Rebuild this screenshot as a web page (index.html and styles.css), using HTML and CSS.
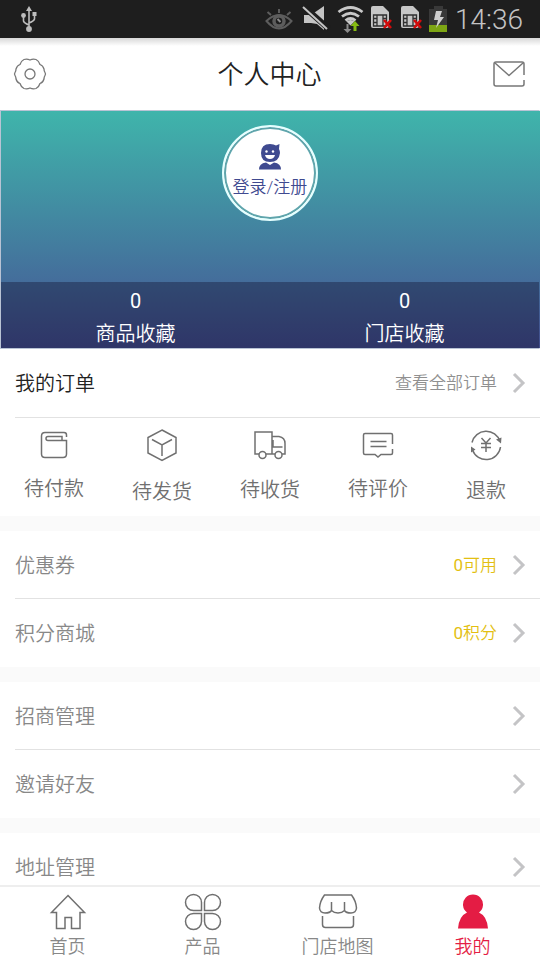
FILE: index.html
```html
<!DOCTYPE html>
<html lang="zh-CN">
<head>
<meta charset="utf-8">
<meta name="viewport" content="width=device-width, initial-scale=1">
<title>个人中心</title>
<link rel="stylesheet" href="styles.css">
</head>
<body>
<div class="status">
  <svg class="usb" width="20" height="28" viewBox="0 0 20 28" fill="#bdbdbd" stroke="#bdbdbd">
    <path d="M10 4v19M10 20q-5-2-5.500-4v-4M10 18q5-2 5.500-4v-4" fill="none" stroke-width="1.600"/>
    <path d="M10 1l3 5H7z" stroke="none"/><circle cx="10" cy="24" r="2.900" stroke="none"/><circle cx="4.500" cy="10.500" r="2.400" stroke="none"/><path d="M13.500 7h4v4h-4z" stroke="none"/>
  </svg>
  <svg width="184" height="38" viewBox="266 0 184 38">
    <g fill="none" stroke="#5d5d5d" stroke-width="2">
      <path d="M267.500 21q12.500-12 25 0q-12.500 15-25 0z"/><circle cx="280" cy="21" r="5" stroke-width="3.500"/><path d="M280 9v4M268.500 12l3.500 3M291.500 12l-3.500 3"/>
    </g>
    <path d="M278.500 19l3 3" stroke="#8a8a8a" stroke-width="2"/>
    <path d="M305 15h7l13-9v24l-7-6-6-1h-7z" fill="#c4c4c4"/>
    <path d="M303 5l27 24" stroke="#1e1e1e" stroke-width="6"/><path d="M304 7l24 22" stroke="#c4c4c4" stroke-width="2"/>
    <g fill="none" stroke="#c8c8c8" stroke-width="2.800"><path d="M339.500 12q12-9 24 0M343 16.500q8.500-6.500 17 0M346.500 20.500q5-4 10 0"/></g>
    <path d="M347.500 21.500q4-3 8 0l-4 4z" fill="#c8c8c8"/>
    <path d="M347.500 24h2v5h3l-4 4-4-4h3z" fill="#8b8b8b"/><path d="M354.500 31v-5h-3l4.500-5 4.500 5h-3v5z" fill="#86bb12"/>
    <g id="sim">
      <path d="M372 8q0-2 2-2h10l6 6v14q0 2-2 2h-14q-2 0-2-2z" fill="#c6c6c6"/>
      <path d="M374.500 15h13v11h-13zM378 15v11M384 15v11M374.500 18.500h3.500M374.500 22.500h3.500M384 18.500h3.500" fill="none" stroke="#303030" stroke-width="1.300"/>
      <path d="M385 20l7 8M392 20l-7 8" stroke="#d40b0b" stroke-width="2.600"/>
    </g>
    <use href="#sim" x="30"/>
    <path d="M430 9h5V6h9v3h4v16h-18z" fill="#393939"/><path d="M430 25h18v7h-18z" fill="#7da514"/>
    <path d="M437 11h6l-2 6h4l-8 11 2-8h-4z" fill="#d0d0d0"/>
  </svg>
  <time class="clock">14:36</time>
</div>

<header class="header">
  <button class="icon-button" aria-label="设置">
    <svg width="34" height="34" viewBox="0 0 34 34" fill="none" stroke="#777" stroke-width="1.300">
      <path d="M11 2.500Q14 1.500 17 3Q20 1.500 23 2.500Q26 4 27 7.500Q30 8.500 31 12Q31 14 32 15.500Q33 17 32 18.500Q31 20 31 22Q30 25.500 27 26.500Q26 30 23 31.500Q20 32.500 17 31Q14 32.500 11 31.500Q8 30 7 26.500Q4 25.500 3 22Q3 20 2 18.500Q1 17 2 15.500Q3 14 3 12Q4 8.500 7 7.500Q8 4 11 2.500Z"/>
      <circle cx="17" cy="17" r="5"/>
    </svg>
  </button>
  <h1 class="title">个人中心</h1>
  <button class="icon-button" aria-label="消息">
    <svg width="34" height="34" viewBox="0 0 34 34" fill="none" stroke="#777" stroke-width="1.500" stroke-linejoin="round">
      <path d="M32 18V7q0-2-2-2H4Q2 5 2 7v20q0 2 2 2h26q2 0 2-2v-4"/><path d="M3 6l14 12.500L31 6"/>
    </svg>
  </button>
</header>

<main class="content">
  <section class="hero">
    <a class="avatar" href="#login">
      <svg width="24" height="28" viewBox="0 0 24 28">
        <path d="M3 10Q3 1 12 1q4 0 6 1.500L21.500 1l-.500 5q1 2 1 4q-1 9-10 9T3 10z" fill="#3f4a90"/>
        <circle cx="8.500" cy="8.500" r="1.200" fill="#fff"/><circle cx="15" cy="8.500" r="1.200" fill="#fff"/><path d="M7 12h10q-1 4-5 4t-5-4z" fill="#fff"/>
        <path d="M1 26.500q0-6 7-7l4 2.500 4-2.500q7 1 7 7z" fill="#3f4a90"/>
      </svg>
      <span>登录/注册</span>
    </a>
    <div class="favorites">
      <a href="#goods"><span class="count">0</span><span>商品收藏</span></a>
      <a href="#stores"><span class="count">0</span><span>门店收藏</span></a>
    </div>
  </section>

  <section class="group">
    <a class="row dark" href="#orders"><span>我的订单</span><span class="extra">查看全部订单</span><svg class="chevron" viewBox="0 0 14 22"><path d="M2 2l9 9-9 9"/></svg></a>
    <div class="orders">
      <a href="#pay">
        <svg width="34" height="34" viewBox="0 0 34 34"><path d="M29.500 9V7q0-2.500-2.500-2.500H8Q4.500 4.500 4.500 8v18q0 3.500 3.500 3.500h18q3.500 0 3.500-3.500V12.500H11q-2 0-2-2t2-2h14v4"/></svg>
        <span>待付款</span></a>
      <a href="#ship">
        <svg width="34" height="37" viewBox="0 0 34 37"><path d="M17 2l14 7.500v15.500L17 32.500 3 25V9.500zM7 11.500l10 5.500 10-5.500M17 17v11"/></svg>
        <span>待发货</span></a>
      <a href="#receive">
        <svg width="34" height="35" viewBox="0 0 34 35"><path d="M6 26H2V4h17v22h-6.500M19 8.500h7q6 1 6 7V26h-3M22 26h-3M20 12v7h9.500"/><circle cx="9.500" cy="27" r="3.500"/><circle cx="25.500" cy="27" r="3.500"/></svg>
        <span>待收货</span></a>
      <a href="#review">
        <svg width="34" height="34" viewBox="0 0 34 34"><path d="M31.500 16V7q0-1.500-1.500-1.500H4Q2.500 5.500 2.500 7v18q0 1.500 1.500 1.500h10l3 2.500 3-2.500h10q1.500 0 1.500-1.500v-4M9.500 13.500h16M9.500 18.500h16"/></svg>
        <span>待评价</span></a>
      <a href="#refund">
        <svg width="34" height="36" viewBox="0 0 34 36"><path d="M3 14.500A14.500 14.500 0 0 1 31 13.500M31.500 19A14.500 14.500 0 0 1 3.500 22M12.500 10l4.500 5 4.500-5M12 15.500h10M12 19.500h10M17 15v9"/><path class="solid" d="M27 11.500l5 4 .500-6zM6.500 21.500l-4.500-3v6z"/></svg>
        <span>退款</span></a>
    </div>
  </section>

  <section class="group">
    <a class="row" href="#coupon"><span>优惠券</span><span class="extra gold"><span class="count">0</span>可用</span><svg class="chevron" viewBox="0 0 14 22"><path d="M2 2l9 9-9 9"/></svg></a>
    <a class="row" href="#points"><span>积分商城</span><span class="extra gold"><span class="count">0</span>积分</span><svg class="chevron" viewBox="0 0 14 22"><path d="M2 2l9 9-9 9"/></svg></a>
  </section>
  <section class="group">
    <a class="row" href="#business"><span>招商管理</span><svg class="chevron" viewBox="0 0 14 22"><path d="M2 2l9 9-9 9"/></svg></a>
    <a class="row" href="#invite"><span>邀请好友</span><svg class="chevron" viewBox="0 0 14 22"><path d="M2 2l9 9-9 9"/></svg></a>
  </section>
  <section class="group">
    <a class="row" href="#address"><span>地址管理</span><svg class="chevron" viewBox="0 0 14 22"><path d="M2 2l9 9-9 9"/></svg></a>
  </section>
</main>

<nav class="tabs">
  <a href="#home"><svg width="40" height="38" viewBox="0 0 40 38"><path d="M20 2.500L36.500 19.500H32V35.500H23.500V24.500H17V35.500H8.500V19.500H3.500Z"/></svg><span>首页</span></a>
  <a href="#products"><svg width="40" height="38" viewBox="0 0 40 38"><path d="M18.500 17.500H10.500A8 8 0 1 1 18.500 9.500ZM21.500 17.500V9.500A8 8 0 1 1 29.500 17.500ZM18.500 20.500V28.500A8 8 0 1 1 10.500 20.500ZM21.500 20.500H29.500A8 8 0 1 1 21.500 28.500Z"/></svg><span>产品</span></a>
  <a href="#map"><svg width="40" height="38" viewBox="0 0 40 38"><path d="M6.500 2H33.500Q38 8 38.500 15Q38 20 33 20Q28 20 26.500 17.500Q24 20 20 20Q16 20 13.500 17.500Q12 20 7 20Q2 20 1.500 15Q2 8 6.500 2ZM13.500 9v8.500M26.500 9v8.500M4.500 23v8.500q0 3 3 3h25q3 0 3-3V23"/></svg><span>门店地图</span></a>
  <a class="active" href="#me" aria-current="page"><svg width="40" height="38" viewBox="0 0 40 38"><path d="M14 19.500A10 10 0 1 1 26 19.500Q34 23 35 35.500H5Q6 23 14 19.500Z"/></svg><span>我的</span></a>
</nav>
</body>
</html>
```
FILE: styles.css
```css
* { box-sizing: border-box; }

body {
  margin: 0;
  height: 100vh;
  display: flex;
  flex-direction: column;
  overflow: hidden;
  background: #fff;
  color: #707070;
  font-family: Roboto, "Noto Sans CJK SC", sans-serif;
  font-size: 20px;
  font-weight: 350;
  line-height: 30px;
}

a { color: inherit; text-decoration: none; }
svg { display: block; flex: none; }
.count { font-weight: 400; }

.status {
  flex: none;
  display: flex;
  align-items: center;
  height: 38px;
  padding: 0 17px 0 19px;
  background: #1e1e1e;
}
.usb { margin-right: auto; }
.clock {
  margin-left: 6px;
  padding-top: 2px;
  color: #c4c4c4;
  font-size: 28px;
}

.header {
  flex: none;
  display: flex;
  align-items: center;
  justify-content: space-between;
  height: 72px;
  padding: 0 14px 0 13px;
  background: linear-gradient(#d8d8d8, #fff 8px);
}
.icon-button {
  padding: 0;
  border: 0;
  background: none;
}
.title {
  margin: 0;
  padding-top: 2px;
  color: #222;
  font-size: 26px;
  font-weight: 350;
}

.content {
  flex: 1;
  min-height: 0;
  overflow: hidden;
  background: #fafafa;
}

.hero {
  display: flex;
  flex-direction: column;
  align-items: center;
  justify-content: space-between;
  height: 239px;
  padding-top: 14px;
  border: 1px solid #b9c3d4;
  border-right-color: transparent;
  background: linear-gradient(#3fb5ab, #446d9b 72%, #424c8c) border-box;
}
.avatar {
  display: flex;
  flex-direction: column;
  align-items: center;
  width: 96px;
  height: 96px;
  padding-top: 16px;
  border: 2px solid #e5ffff;
  border-radius: 50%;
  background: #fff;
  box-shadow: inset 0 0 0 2px #5fa5ac;
  color: #3f4a90;
  font-size: 17px;
}
.avatar span { padding-top: 1px; }
.favorites {
  display: flex;
  align-self: stretch;
  height: 66px;
  background: rgba(20, 20, 50, 0.4);
  color: #fff;
}
.favorites a {
  flex: 1;
  display: flex;
  flex-direction: column;
  align-items: center;
  line-height: 33px;
  padding-top: 3px;
}

.group { background: #fff; }
.group + .group { margin-top: 15px; }

.row {
  display: flex;
  align-items: center;
  height: 68px;
  margin-left: 15px;
  padding-right: 14px;
  border-bottom: 1px solid #e2e2e2;
  color: #888;
}
.row > span { padding-top: 2px; }
.row + .row { border-bottom-color: transparent; }
.row.dark {
  height: 69px;
  color: #222;
}
.row .extra {
  margin-left: auto;
  padding-top: 0;
  color: #909090;
  font-size: 17px;
}
.row .gold { color: #e3bf12; }
.chevron {
  width: 14px;
  height: 22px;
  margin-left: auto;
  fill: none;
  stroke: #c4c4c6;
  stroke-width: 3;
}
.extra + .chevron { margin-left: 15px; }

.orders {
  display: flex;
  height: 98px;
  padding-top: 10px;
}
.orders a {
  flex: 1;
  display: flex;
  flex-direction: column;
  align-items: center;
  gap: 12px;
}
.orders svg {
  fill: none;
  stroke: #707070;
  stroke-width: 1.5;
}
.orders .solid { fill: #707070; stroke: none; }

.tabs {
  flex: none;
  display: flex;
  height: 75px;
  padding-top: 6px;
  border-top: 2px solid #eee;
  color: #888;
  font-size: 18px;
}
.tabs a {
  flex: 1;
  display: flex;
  flex-direction: column;
  align-items: center;
}
.tabs span { padding-top: 1px; }
.tabs svg {
  fill: none;
  stroke: #707070;
  stroke-width: 1.5;
}
.tabs .active { color: #e41c44; }
.tabs .active svg { fill: #e41c44; stroke: none; }
```
